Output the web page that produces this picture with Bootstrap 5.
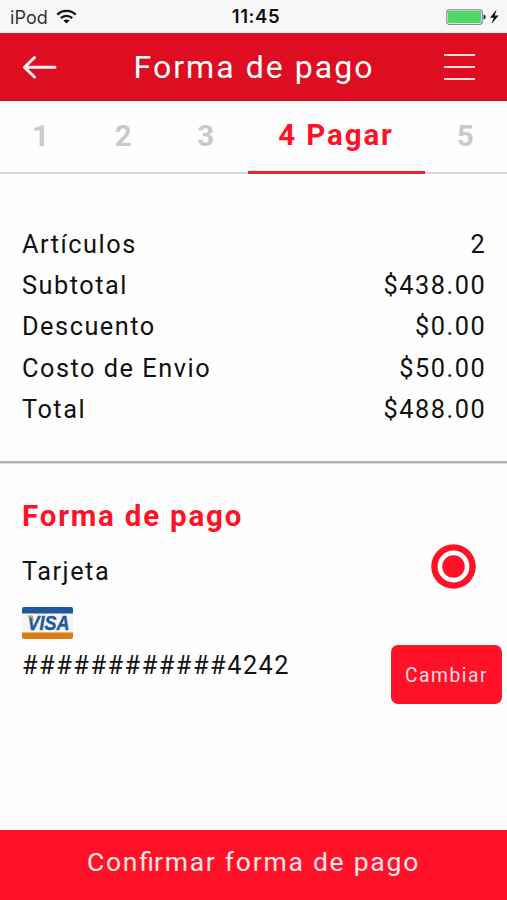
<!DOCTYPE html>
<html lang="es">
<head>
<meta charset="utf-8">
<meta name="viewport" content="width=device-width, initial-scale=1">
<title>Forma de pago</title>
<link href="https://cdn.jsdelivr.net/npm/bootstrap@5.3.0/dist/css/bootstrap.min.css" rel="stylesheet">
<style>
body{font-family:Roboto,"Liberation Sans",sans-serif;color:#111;background:#fefefe;height:900px;overflow:hidden}
.status-bar{height:33px;background:#f7f7f7;font-family:Inter,sans-serif;color:#111;padding:1px 8px 0 10px}
.status-bar>div{flex:1 1 0}
.carrier{font-size:18px;letter-spacing:.1px;color:#333}
.clock{font-size:18.5px;font-weight:600;letter-spacing:.6px;padding-left:3px}
.app-bar{height:68px;background:#df0d21;color:#fff;padding:0 32px 0 22px}
.app-title{font-size:32px;letter-spacing:2.05px;line-height:68px;font-weight:400;padding-left:7px}
.steps{height:73px;font-weight:700;color:#c9c9c9}
.step{flex:1 1 0;font-size:29.5px;line-height:71px;border-bottom:2px solid #d8d8d8;text-align:center;padding-right:1px}
.step.current{flex:0 0 177px;color:#ff1228;letter-spacing:1.9px;line-height:69px;border-bottom:3px solid #e9262e;padding:0}
.summary{padding:50px 22px 0;height:287px;font-size:25.3px;letter-spacing:1.52px}
.summary-row{height:41.2px;line-height:41px}
.summary-row dd{margin-right:-1.2px}
.summary dt{font-weight:400}
.divider{height:3px;background:#b3b3b3;border-bottom:1px solid #d9d9d9}
.payment{padding:29px 5px 0 22px}
.section-title{font-size:29.5px;letter-spacing:1.8px;font-weight:700;line-height:46px;color:#ff1228}
.pay-text{font-size:25.3px;letter-spacing:1.52px}
.method-row{height:68px;padding-top:5px}
.method-name{padding-top:12px}
.radio-slot{padding-right:26px}
.card-info{padding-bottom:19px}
.card-number{margin-top:8px;line-height:38px}
.card-logo{margin-left:-.5px}
.btn-change{width:111px;height:59px;background:#ff1228;color:#ffdfe1;font-size:19.3px;letter-spacing:1.5px;border:0;border-radius:7px;padding:3px 0 0}
.btn-confirm{height:70px;background:#ff1228;color:#ffe5e7;font-size:26.5px;letter-spacing:1.75px;border:0;border-radius:0;padding:0 0 6px}
.liga{letter-spacing:0}
</style>
</head>
<body class="d-flex flex-column">
<div class="status-bar d-flex align-items-center">
  <div class="carrier d-flex align-items-center gap-2">iPod
    <svg width="21" height="16" viewBox="0 0 21 16" fill="none" stroke="#111" stroke-width="2.3"><path d="M1.3 5.6C6.4.7 14.6.7 19.7 5.6M4.8 9.2C8 6.2 13 6.2 16.2 9.2"/><path d="M10.5 14.6 7.4 11.6C9.1 10 11.9 10 13.6 11.6Z" fill="#111" stroke="none"/></svg>
  </div>
  <div class="clock text-center">11:45</div>
  <div class="d-flex justify-content-end align-items-center">
    <svg width="53" height="18" viewBox="0 0 53 18"><rect x=".8" y="1.8" width="35.5" height="14.5" rx="2.5" fill="#fff" stroke="#8d8d8d" stroke-width="1.3"/><rect x="2" y="3" width="33" height="12" rx="1" fill="#4cd964"/><path d="M37.5 6.5q2.2.3 2.2 2.5t-2.2 2.5z" fill="#222"/><path d="M50.5 1.5 44 9.8h3.7L45.6 16 52.6 7.5h-3.8z" fill="#111"/></svg>
  </div>
</div>
<header class="app-bar d-flex align-items-center justify-content-between">
  <svg width="35" height="26" viewBox="0 0 35 26" fill="none" stroke="#fff1f1" stroke-width="3" stroke-linecap="round" stroke-linejoin="round"><path d="M33 13.3H2.5M12.5 3.500 2.500 13.300 12.500 23"/></svg>
  <h1 class="app-title m-0">Forma de pago</h1>
  <svg width="31" height="28" viewBox="0 0 31 28" stroke="#ffdcdc" stroke-width="2"><path d="M0 2h31M0 14h31M0 26h31"/></svg>
</header>
<nav class="steps d-flex">
  <div class="step">1</div><div class="step">2</div><div class="step">3</div><div class="step current">4 Pagar</div><div class="step">5</div>
</nav>
<dl class="summary m-0">
  <div class="summary-row d-flex justify-content-between"><dt>Artículos</dt><dd>2</dd></div>
  <div class="summary-row d-flex justify-content-between"><dt>Subtotal</dt><dd>$438.00</dd></div>
  <div class="summary-row d-flex justify-content-between"><dt>Descuento</dt><dd>$0.00</dd></div>
  <div class="summary-row d-flex justify-content-between"><dt>Costo de Envio</dt><dd>$50.00</dd></div>
  <div class="summary-row d-flex justify-content-between"><dt>Total</dt><dd>$488.00</dd></div>
</dl>
<div class="divider"></div>
<section class="payment flex-grow-1">
  <h2 class="section-title m-0">Forma de pago</h2>
  <div class="method-row d-flex justify-content-between align-items-start">
    <div class="pay-text method-name lh-sm">Tarjeta</div>
    <div class="radio-slot"><svg class="d-block" width="45" height="45" viewBox="0 0 45 45"><circle cx="22.5" cy="22.5" r="22.3" fill="#ff1228"/><circle cx="22.5" cy="22.5" r="13.6" fill="none" stroke="#fff" stroke-width="4.6"/></svg></div>
  </div>
  <div class="d-flex justify-content-between align-items-end">
    <div class="card-info">
      <svg class="card-logo d-block" width="51" height="32" viewBox="0 0 51 32"><rect width="51" height="32" rx="2" fill="#f5f5f6"/><path d="M0 6.5V2q0-2 2-2h47q2 0 2 2v4.5z" fill="#21579c"/><path d="M0 25.5v4.5q0 2 2 2h47q2 0 2-2v-4.5z" fill="#dc7c12"/><text x="5.5" y="22.5" font-family="Liberation Sans, sans-serif" font-size="19.5" font-weight="700" font-style="italic" fill="#24589b" stroke="#24589b" stroke-width=".4" textLength="42" lengthAdjust="spacingAndGlyphs">VISA</text><path d="M4.500 8.800h6.500l1 5.700q-2-4-7.500-5.700z" fill="#e59a3c"/></svg>
      <div class="pay-text card-number">############4242</div>
    </div>
    <button class="btn btn-change">Cambiar</button>
  </div>
</section>
<button class="btn btn-confirm w-100 flex-shrink-0">Con<span class="liga">fi</span>rmar forma de pago</button>
<script src="https://cdn.jsdelivr.net/npm/bootstrap@5.3.0/dist/js/bootstrap.bundle.min.js"></script>
</body>
</html>
